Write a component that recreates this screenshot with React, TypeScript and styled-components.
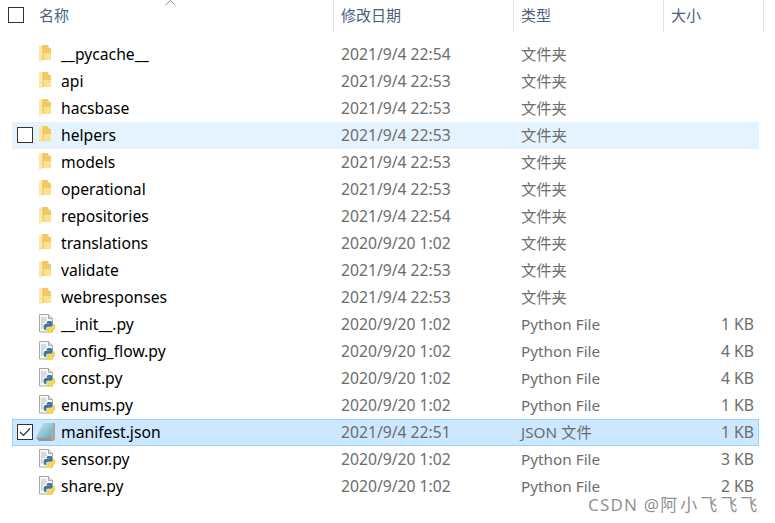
import React from 'react';
import styled, { createGlobalStyle } from 'styled-components';

const GlobalStyle = createGlobalStyle`
	html, body {
		margin: 0;
		padding: 0;
		background: #fff;
	}
`;

const Page = styled.div`
	position: relative;
	width: 775px;
	height: 523px;
	overflow: hidden;
	background: #fff;
	font-family: 'Noto Sans', 'Noto Sans CJK SC', sans-serif;
	font-size: 15.7px;
`;

const Header = styled.div`
	display: grid;
	grid-template-columns: 322px 180px 150px 100px;
	height: 32px;
	margin-left: 12px;
	margin-bottom: 9px;
`;

const HeaderCell = styled.div<{ $first?: boolean }>`
	display: flex;
	align-items: center;
	gap: 15px;
	box-sizing: border-box;
	padding: 0 0 3px ${(p) => (p.$first ? '0' : '7px')};
	border-right: 1px solid #e5e5e5;
	color: #4c607a;
	font-size: 15px;
	white-space: nowrap;
`;

const SortCaret = styled.svg`
	position: absolute;
	left: 165px;
	top: 0;
`;

const Box = styled.span<{ $hidden?: boolean }>`
	display: flex;
	align-items: center;
	justify-content: center;
	box-sizing: border-box;
	flex: none;
	width: 16px;
	height: 16px;
	border: 1px solid #333;
	background: #fff;
	visibility: ${(p) => (p.$hidden ? 'hidden' : 'visible')};
`;

const HeaderBox = styled(Box)`
	margin-left: -4px;
`;

const List = styled.div`
	display: flex;
	flex-direction: column;
	width: 747px;
	margin-left: 12px;
`;

const Row = styled.div<{ $state?: 'hover' | 'selected' }>`
	display: grid;
	grid-template-columns: 321px 180px 150px 90px;
	align-items: start;
	box-sizing: border-box;
	height: 27px;
	line-height: 24px;
	background: ${(p) =>
		p.$state === 'selected' ? '#cce8ff' : p.$state === 'hover' ? '#e5f3ff' : 'transparent'};
	border: ${(p) => (p.$state === 'selected' ? '1px solid #99d1ff' : '1px solid transparent')};
`;

const NameCell = styled.div`
	display: flex;
	align-items: center;
	height: 24px;
	padding-left: 4px;
	color: #000;
	white-space: nowrap;
`;

const IconSlot = styled.span`
	display: flex;
	flex: none;
	width: 22px;
	height: 20px;
	margin: 0 3px;
`;

const DateCell = styled.div`
	padding-left: 7px;
	color: #6d6d6d;
	white-space: nowrap;
`;

const TypeCell = styled(DateCell)`
	font-size: 15.3px;
`;

const SizeCell = styled(DateCell)`
	padding: 0;
	text-align: right;
`;

const Watermark = styled.div`
	position: absolute;
	left: 588px;
	top: 497px;
	color: #929292;
	font-size: 17px;
	line-height: 16px;
	letter-spacing: 1.2px;
	white-space: nowrap;
`;

const WatermarkName = styled.span`
	letter-spacing: 3px;
`;

const FolderIcon = () => (
	<svg width="22" height="20" viewBox="0 0 22 20">
		<path d="M6 1h6l1 3h2v12H6z" fill="#f2ca62" />
		<path d="M7 9h8v7H7z" fill="#fbe08e" />
		<path d="M3 2l4-1v15l-4 2z" fill="#fce7a6" />
		<path d="M7 1v15" stroke="#e6c064" />
	</svg>
);

const PythonIcon = () => (
	<svg width="22" height="20" viewBox="0 0 22 20">
		<path d="M3.500.5h9l4 4v13.500h-13z" fill="#f7f7f7" stroke="#a8a8a8" />
		<path d="M12.500.5v4h4" fill="#ddd" stroke="#a8a8a8" />
		<path d="M5 4h5M5 6h6M5 8h4M5 10h2M5 12h2M5 14h2" stroke="#bdbdbd" />
		<g transform="translate(7.5 7) scale(.5)">
			<path
				d="M11.900 0C6 0 6.300 2.600 6.300 2.600v2.700H12v.8H4.100S.3 5.700.3 11.900c0 6.100 3.300 5.900 3.300 5.900h2V15s-.1-3.300 3.300-3.300h5.600s3.100.1 3.100-3V3.200S18.100 0 11.900 0z"
				fill="#3a76a8"
			/>
			<path
				d="M12.100 24c5.900 0 5.600-2.600 5.600-2.600v-2.700H12v-.8h7.900s3.800.4 3.800-5.800c0-6.100-3.300-5.900-3.300-5.900h-2V9s.1 3.300-3.300 3.300H9s-3.100-.1-3.100 3v5.500S5.900 24 12.100 24z"
				fill="#f7d54e"
			/>
		</g>
	</svg>
);

const JsonIcon = () => (
	<svg width="22" height="20" viewBox="0 0 22 20">
		<defs>
			<linearGradient id="padCover" x1="0" y1="0" x2="1" y2="1">
				<stop offset="0" stopColor="#cfe9ee" />
				<stop offset="1" stopColor="#5fa6c4" />
			</linearGradient>
		</defs>
		<path d="M8 1h11v17l-2 1H6z" fill="#d9d9d2" />
		<path d="M7 1h10l-2 14L0 16z" fill="url(#padCover)" />
		<path d="M0 16l15-1 2 4H3z" fill="#8f9a9c" />
		<path d="M17 1h2v17l-2 1-2-4z" fill="#aaa99c" />
	</svg>
);

type Kind = 'folder' | 'python' | 'json';

type Entry = {
	name: string;
	date: string;
	type: string;
	size?: string;
	kind: Kind;
	state?: 'hover' | 'selected';
};

const folder = (name: string, date: string, state?: 'hover'): Entry => ({
	name,
	date,
	type: '文件夹',
	kind: 'folder',
	state,
});

const python = (name: string, size: string): Entry => ({
	name,
	date: '2020/9/20 1:02',
	type: 'Python File',
	size,
	kind: 'python',
});

const entries: Entry[] = [
	folder('__pycache__', '2021/9/4 22:54'),
	folder('api', '2021/9/4 22:53'),
	folder('hacsbase', '2021/9/4 22:53'),
	folder('helpers', '2021/9/4 22:53', 'hover'),
	folder('models', '2021/9/4 22:53'),
	folder('operational', '2021/9/4 22:53'),
	folder('repositories', '2021/9/4 22:54'),
	folder('translations', '2020/9/20 1:02'),
	folder('validate', '2021/9/4 22:53'),
	folder('webresponses', '2021/9/4 22:53'),
	python('__init__.py', '1 KB'),
	python('config_flow.py', '4 KB'),
	python('const.py', '4 KB'),
	python('enums.py', '1 KB'),
	{
		name: 'manifest.json',
		date: '2021/9/4 22:51',
		type: 'JSON 文件',
		size: '1 KB',
		kind: 'json',
		state: 'selected',
	},
	python('sensor.py', '3 KB'),
	python('share.py', '2 KB'),
];

const icons = {
	folder: <FolderIcon />,
	python: <PythonIcon />,
	json: <JsonIcon />,
};

const App = () => {
	return (
		<Page>
			<GlobalStyle />
			<Header>
				<HeaderCell $first>
					<HeaderBox />
					名称
				</HeaderCell>
				<HeaderCell>修改日期</HeaderCell>
				<HeaderCell>类型</HeaderCell>
				<HeaderCell>大小</HeaderCell>
			</Header>
			<SortCaret width="11" height="6" viewBox="0 0 11 6">
				<path d="M.5 5 5.500.5 10.500 5" fill="none" stroke="#8a8a8a" />
			</SortCaret>
			<List>
				{entries.map((entry) => (
					<Row key={entry.name} $state={entry.state}>
						<NameCell>
							<Box $hidden={!entry.state}>
								{entry.state === 'selected' && (
									<svg width="12" height="10" viewBox="0 0 12 10">
										<path d="M1 5l3.500 3.500L11 1.500" fill="none" stroke="#333" strokeWidth="1.200" />
									</svg>
								)}
							</Box>
							<IconSlot>{icons[entry.kind]}</IconSlot>
							{entry.name}
						</NameCell>
						<DateCell>{entry.date}</DateCell>
						<TypeCell>{entry.type}</TypeCell>
						<SizeCell>{entry.size}</SizeCell>
					</Row>
				))}
			</List>
			<Watermark>
				CSDN @<WatermarkName>阿小飞飞飞</WatermarkName>
			</Watermark>
		</Page>
	);
};

export default App;
